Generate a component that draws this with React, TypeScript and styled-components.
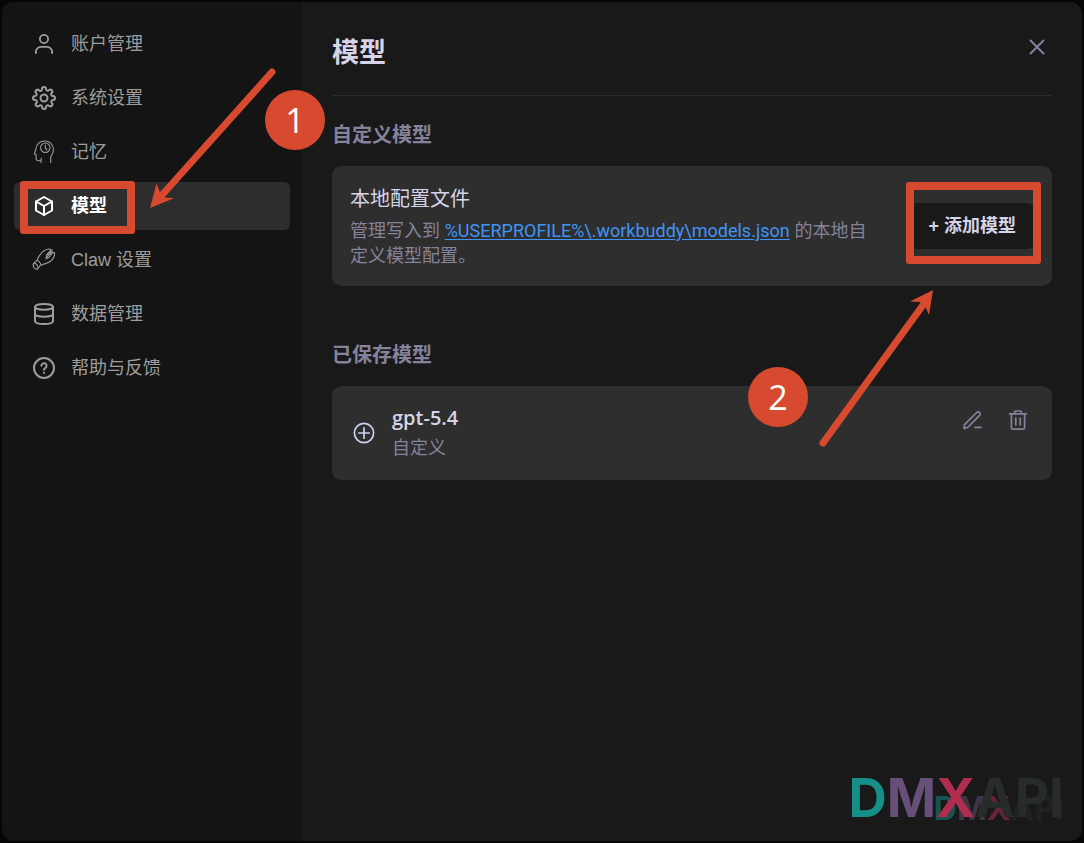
import React from "react";
import styled, { createGlobalStyle } from "styled-components";

const accent = "#d84a2f";
const cjk = `"Noto Sans CJK SC", sans-serif`;

const GlobalStyle = createGlobalStyle`
  * { box-sizing: border-box; }
  body {
    margin: 0;
    background: #060606;
    font-family: "Open Sans", ${cjk};
  }
  button { font: inherit; border: 0; margin: 0; cursor: pointer; }
  h1, h2, h3, p { margin: 0; }
`;

const Page = styled.div`
  min-height: 100vh;
  padding: 2px;
  display: flex;
`;

const Dialog = styled.div`
  position: relative;
  flex: 1;
  display: flex;
  overflow: hidden;
  border-radius: 12px;
  background: #191919;
`;

const Sidebar = styled.nav`
  flex: 0 0 300px;
  display: flex;
  flex-direction: column;
  gap: 6px;
  padding: 18px 12px;
  background: #141414;
  font-family: "Liberation Sans", ${cjk};
`;

const NavItem = styled.button<{ $active?: boolean }>`
  position: relative;
  display: flex;
  align-items: center;
  gap: 15px;
  height: 48px;
  padding: 0 18px;
  border-radius: 6px;
  text-align: left;
  font-size: 18px;
  line-height: 24px;
  font-weight: ${(p) => (p.$active ? 700 : 400)};
  color: ${(p) => (p.$active ? "#ffffff" : "#9d9d9d")};
  background: ${(p) => (p.$active ? "#2d2d2d" : "transparent")};
`;

const Main = styled.main`
  flex: 1;
  min-width: 0;
  padding: 0 30px 30px;
`;

const Header = styled.header`
  display: flex;
  align-items: flex-start;
  justify-content: space-between;
  height: 94px;
  padding-top: 30px;
  border-bottom: 1px solid #2a2a2a;
`;

const Title = styled.h1`
  font-size: 27px;
  line-height: 40px;
  font-weight: 700;
  color: #d6d4e6;
`;

const IconButton = styled.button`
  display: flex;
  align-items: center;
  justify-content: center;
  width: 30px;
  height: 30px;
  padding: 0;
  background: transparent;
  color: #85829b;
`;

const Section = styled.section`
  padding-top: 24px;
  & + & { padding-top: 54px; }
`;

const SectionTitle = styled.h2`
  margin-bottom: 16px;
  font-size: 20px;
  line-height: 30px;
  font-weight: 700;
  color: #85829b;
`;

const Card = styled.div<{ $align: string; $gap: number }>`
  display: flex;
  align-items: ${(p) => p.$align};
  gap: ${(p) => p.$gap}px;
  padding: 18px;
  border-radius: 9px;
  background: #2e2e2e;
`;

const CardBody = styled.div`
  flex: 1;
  min-width: 0;
`;

const ConfigTitle = styled.h3`
  margin-bottom: 4px;
  font-size: 20px;
  line-height: 30px;
  font-weight: 400;
  color: #d6d4e6;
`;

const ConfigText = styled.p`
  font-size: 18px;
  line-height: 25px;
  color: #85829b;
`;

const FileLink = styled.a`
  color: #3f94f6;
  font-family: Roboto, sans-serif;
  text-decoration: underline;
  text-underline-offset: 2px;
`;

const AddButton = styled.button`
  position: relative;
  flex: none;
  height: 46px;
  padding: 0 18px;
  border-radius: 6px;
  background: #191919;
  color: #d6d4e6;
  font-family: "Liberation Sans", ${cjk};
  font-size: 18px;
  line-height: 24px;
  font-weight: 600;
`;

const ModelIcon = styled.div`
  display: flex;
  padding-left: 2px;
  color: #c9d3f2;
`;

const ModelName = styled.h3`
  font-size: 20px;
  line-height: 28px;
  font-weight: 600;
  color: #d6d4e6;
`;

const ModelKind = styled.p`
  font-size: 18px;
  line-height: 30px;
  color: #85829b;
`;

const Actions = styled.div`
  display: flex;
  align-self: flex-start;
  gap: 15px;
  padding: 1px 1px 0 0;
`;

const Frame = styled.span<{ $inset: string }>`
  position: absolute;
  inset: ${(p) => p.$inset};
  border: 8px solid ${accent};
  border-radius: 3px;
  pointer-events: none;
`;

const Step = styled.div<{ $left?: number; $right?: number; $top: number }>`
  position: absolute;
  top: ${(p) => p.$top}px;
  ${(p) => (p.$left !== undefined ? `left: ${p.$left}px;` : `right: ${p.$right}px;`)}
  display: flex;
  align-items: center;
  justify-content: center;
  width: 60px;
  height: 60px;
  border-radius: 50%;
  background: ${accent};
  color: #fff;
  font-size: 34px;
  line-height: 40px;
`;

const Arrow = styled.svg<{ $left?: number; $right?: number; $top: number }>`
  position: absolute;
  top: ${(p) => p.$top}px;
  ${(p) => (p.$left !== undefined ? `left: ${p.$left}px;` : `right: ${p.$right}px;`)}
  color: ${accent};
  pointer-events: none;
`;

const Watermark = styled.div<{ $size: number; $opacity: number }>`
  position: absolute;
  right: 18px;
  bottom: 16px;
  display: flex;
  font-family: Inter, sans-serif;
  font-size: ${(p) => p.$size}px;
  line-height: ${(p) => p.$size}px;
  font-weight: 700;
  opacity: ${(p) => p.$opacity};
  pointer-events: none;
`;

const Letter = styled.span<{ $color: string }>`
  color: ${(p) => p.$color};
`;

type IconProps = { children: React.ReactNode; width?: number };

const Icon = ({ children, width = 1.8 }: IconProps) => (
  <svg
    width="24"
    height="24"
    viewBox="0 0 24 24"
    fill="none"
    stroke="currentColor"
    strokeWidth={width}
    strokeLinecap="round"
    strokeLinejoin="round"
    aria-hidden="true"
  >
    {children}
  </svg>
);

const UserIcon = () => (
  <Icon>
    <circle cx="12" cy="7" r="4.1" />
    <path d="M3.9 21.2v-1.4a5 5 0 0 1 5-5h6.2a5 5 0 0 1 5 5v1.4" />
  </Icon>
);

const GearIcon = () => (
  <Icon width={2}>
    <circle cx="12" cy="12" r="3.5" />
    <path d="M19.4 15a1.65 1.65 0 0 0 .33 1.82l.06.06a2 2 0 0 1-2.83 2.83l-.06-.06a1.65 1.65 0 0 0-2.8 1.18V21a2 2 0 0 1-4 0v-.09a1.65 1.65 0 0 0-2.88-1.18l-.06.06a2 2 0 0 1-2.83-2.83l.06-.06A1.65 1.65 0 0 0 3.1 14H3a2 2 0 0 1 0-4h.09a1.65 1.65 0 0 0 1.18-2.82l-.06-.06a2 2 0 0 1 2.83-2.83l.06.06A1.65 1.65 0 0 0 10 3.09V3a2 2 0 0 1 4 0v.09a1.65 1.65 0 0 0 2.82 1.18l.06-.06a2 2 0 0 1 2.83 2.83l-.06.06A1.65 1.65 0 0 0 20.91 10H21a2 2 0 0 1 0 4h-.09a1.65 1.65 0 0 0-1.51 1z" />
  </Icon>
);

const MemoryIcon = () => (
  <Icon width={1.1}>
    <path d="M18.7 22.5v-5.6c1.8-2.4 2.900-5 2.700-8C21 4.200 17.300 1 12.800 1 8 1 4.200 4.200 4 8.600c0 1.500-.9 3-1.600 4.600-.2.600.2 1 1.700 1.100v4.300c0 1.800 1.300 2.300 3.400 2 1.200-.2 1.900-.9 2-2.300M9.100 20v2.500" />
    <circle cx="13.300" cy="7.700" r="4.700" />
    <path d="M13.300 5v3l1.700 1.800" />
  </Icon>
);

const CubeIcon = () => (
  <Icon width={2}>
    <path d="M12 3l8 4.500v9L12 21l-8-4.500v-9z" />
    <path d="M4 7.500l8 4.500 8-4.500M12 12v9" />
  </Icon>
);

const ClawIcon = () => (
  <Icon width={1.1}>
    <path d="M5 12.500C6.500 8.500 9.500 4.200 12.500 2.500c2-1.200 5-1.900 6.700-1L14.800 6.700l-.9 4.100 3.200-1.600 3.500-4.500 1.900-.2c.3 3.500-1.700 7.300-4.800 9.300-2.900 1.900-6 1.800-8.600 3.600" />
    <path d="M14.800 6.700l4.600-3.600.9-1M14.600 9.800l2-2.800 3.600-3.200" />
    <path d="M1.800 15.300l2.800-2.600c1-.9 4.700 2.500 4 4l-2.800 4.100c-1.900 2-6.200-3-4-5.500z" />
    <path d="M1.800 15.300c1.500-.8 4.700 2.400 4.200 5.200" />
  </Icon>
);

const DatabaseIcon = () => (
  <Icon width={2}>
    <ellipse cx="12" cy="4.800" rx="9" ry="2.900" />
    <path d="M3 5v14c0 1.600 3 3 9 3s9-1.400 9-3V5M3 12c0 1.600 4 2.700 9 2.700s9-1.100 9-2.700" />
  </Icon>
);

const HelpIcon = () => (
  <Icon width={2}>
    <circle cx="12" cy="12" r="10" />
    <path d="M9.400 9.700a2.600 2.600 0 1 1 4.100 2.200c-.9.600-1.500 1-1.500 1.800" />
    <path d="M12 16.800v.1" />
  </Icon>
);

const PlusIcon = () => (
  <Icon width={1.7}>
    <circle cx="12" cy="12" r="9.600" />
    <path d="M12 6.800v10.400M6.800 12h10.400" />
  </Icon>
);

const PencilIcon = () => (
  <Icon width={1.7}>
    <path d="M3 20.300l.5-3.600L15.700 4.500a1.900 1.900 0 0 1 2.700 0l.2.200a1.900 1.900 0 0 1 0 2.700L6.600 19.500z" />
    <path d="M14 19.300h6" />
  </Icon>
);

const TrashIcon = () => (
  <Icon width={1.7}>
    <path d="M3.600 5.800h16.800M8.700 5.500V4.100c0-.7.4-1.100 1.100-1.100h4.400c.7 0 1.100.4 1.100 1.100v1.400M5.400 6v13.800c0 .8.500 1.300 1.300 1.300h10.600c.8 0 1.300-.5 1.300-1.300V6M9.800 10.200v6.600M14.200 10.200v6.600" />
  </Icon>
);

const CloseIcon = () => (
  <Icon width={2}>
    <path d="M5.500 5.500l13 13M18.500 5.500l-13 13" />
  </Icon>
);

const navItems = [
  { label: "账户管理", icon: <UserIcon /> },
  { label: "系统设置", icon: <GearIcon /> },
  { label: "记忆", icon: <MemoryIcon /> },
  { label: "模型", icon: <CubeIcon />, active: true },
  { label: "Claw 设置", icon: <ClawIcon /> },
  { label: "数据管理", icon: <DatabaseIcon /> },
  { label: "帮助与反馈", icon: <HelpIcon /> },
];

const brand: [string, string][] = [
  ["D", "#158f88"],
  ["M", "#684f7a"],
  ["X", "#b02d4f"],
  ["A", "#272b2c"],
  ["P", "#272b2c"],
  ["I", "#272b2c"],
];

const Brand = () => (
  <>
    {brand.map(([letter, color]) => (
      <Letter key={letter} $color={color}>
        {letter}
      </Letter>
    ))}
  </>
);

export default function App() {
  return (
    <Page>
      <GlobalStyle />
      <Dialog role="dialog" aria-labelledby="dialog-title">
        <Sidebar>
          {navItems.map((item) => (
            <NavItem key={item.label} $active={item.active} aria-current={item.active ? "page" : undefined}>
              {item.icon}
              {item.label}
              {item.active && <Frame $inset="-1px 155px -4px 6px" />}
            </NavItem>
          ))}
        </Sidebar>

        <Main>
          <Header>
            <Title id="dialog-title">模型</Title>
            <IconButton aria-label="关闭">
              <CloseIcon />
            </IconButton>
          </Header>

          <Section>
            <SectionTitle>自定义模型</SectionTitle>
            <Card $align="center" $gap={28}>
              <CardBody>
                <ConfigTitle>本地配置文件</ConfigTitle>
                <ConfigText>
                  管理写入到 <FileLink href="#models">%USERPROFILE%\.workbuddy\models.json</FileLink> 的本地自定义模型配置。
                </ConfigText>
              </CardBody>
              <AddButton>
                + 添加模型
                <Frame $inset="-21px -7px -15px -4px" />
              </AddButton>
            </Card>
          </Section>

          <Section>
            <SectionTitle>已保存模型</SectionTitle>
            <Card $align="center" $gap={16}>
              <ModelIcon>
                <PlusIcon />
              </ModelIcon>
              <CardBody>
                <ModelName>gpt-5.4</ModelName>
                <ModelKind>自定义</ModelKind>
              </CardBody>
              <Actions>
                <IconButton aria-label="编辑">
                  <PencilIcon />
                </IconButton>
                <IconButton aria-label="删除">
                  <TrashIcon />
                </IconButton>
              </Actions>
            </Card>
          </Section>
        </Main>

        <Watermark $size={32} $opacity={0.5} aria-hidden="true">
          <Brand />
        </Watermark>
        <Watermark $size={53} $opacity={1}>
          <Brand />
        </Watermark>

        <Arrow $left={144} $top={62} width="134" height="148" viewBox="146 64 134 148" aria-hidden="true">
          <path d="M272 72L162 195" stroke="currentColor" strokeWidth="7" strokeLinecap="round" />
          <path d="M150 208l6.500-24.500 3.500 9 5 5 9 .8z" fill="currentColor" />
        </Arrow>
        <Step $left={263} $top={88}>1</Step>

        <Arrow $right={144} $top={282} width="124" height="168" viewBox="814 284 124 168" aria-hidden="true">
          <path d="M823 443L923 305" stroke="currentColor" strokeWidth="7" strokeLinecap="round" />
          <path d="M933 290l-4 25-4-9-5-4-10-.5z" fill="currentColor" />
        </Arrow>
        <Step $right={274} $top={365}>2</Step>
      </Dialog>
    </Page>
  );
}
